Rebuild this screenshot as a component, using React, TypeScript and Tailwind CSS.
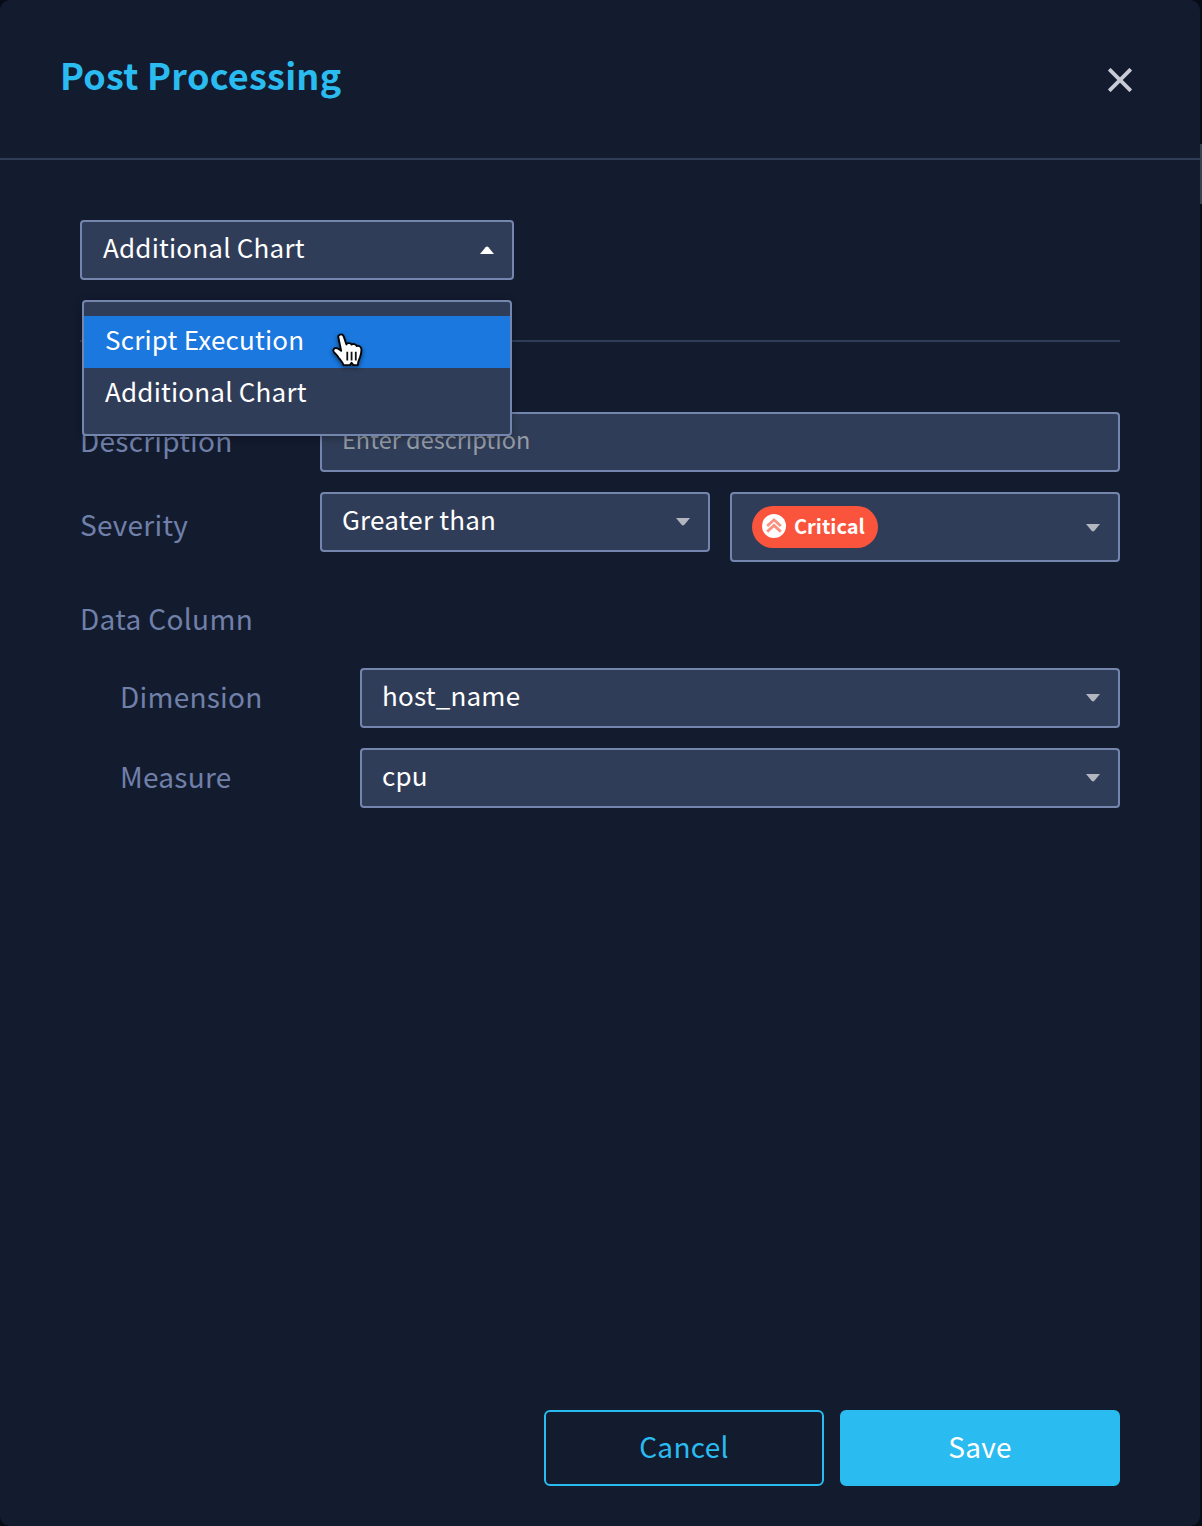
import type { ReactNode } from "react";

function Caret({ up = false }: { up?: boolean }) {
  return (
    <svg className="block h-2 w-[14px] shrink-0" viewBox="0 0 14 8">
      {up ? <path d="M0 8 L5.6 1.2 Q7 -0.4 8.4 1.2 L14 8Z" fill="#ffffff" /> : <path d="M0 0 L14 0 L8.4 6.8 Q7 8.4 5.6 6.8Z" fill="#b3b6bf" />}
    </svg>
  );
}

function Select({ children, className, up }: { children: ReactNode; className: string; up?: boolean }) {
  return (
    <div className={`flex items-center justify-between rounded-[4px] border-2 border-[#7485ae] bg-[#303d58] pr-[18px] pl-5 text-[26px] tracking-[0.2px] text-white ${className}`}>
      {children}
      <Caret up={up} />
    </div>
  );
}

function Value({ children, className = "" }: { children: ReactNode; className?: string }) {
  return <span className={`-mt-[7px] leading-10 ${className}`}>{children}</span>;
}

function Label({ children, className = "" }: { children: ReactNode; className?: string }) {
  return <div className={`text-[28px] leading-10 tracking-[0.25px] text-[#7080a9] ${className}`}>{children}</div>;
}

function HandCursor() {
  return (
    <svg className="absolute top-[25px] left-[243px] h-[42px] w-[42px] drop-shadow-[0_2px_2px_rgba(0,0,0,0.5)]" viewBox="0 0 40 40">
      <path
        d="M12.6 7.2c1.5-.4 2.9.3 3.4 2l2.5 7.4c.2-1.3 4.1-2 4.9.2 1.3-1.1 4.3-.7 4.8 1.3 1.8-.6 4.2.4 4.5 2.8.3 2.8-.4 5.5-1.3 8.1-.8 2.3-2 3.9-2 7.3h-4.3l-1.7-2.2-1.6 2.2h-6.1c-.8-2.8-2.8-4.8-4.6-7-1.2-2.1-2.5-3.4-4.3-5.1-1.3-1.4-1-3.7 1.2-4.2 2-.4 3.5 1 5.5 2.7L10.9 10.3c-.5-1.5.1-2.6 1.7-3.1Z"
        fill="#fff"
        stroke="#050505"
        strokeWidth="1.8"
        strokeLinejoin="round"
      />
      <path d="M19.3 23.5v8.3M23.4 23.5v8.3M27.4 23.5v8.3" stroke="#111" strokeWidth="1.7" />
    </svg>
  );
}

export default function App() {
  return (
    <div className="h-[1526px] w-[1202px] overflow-hidden bg-[#070c17] font-['Noto_Sans_CJK_KR',sans-serif]">
      <div className="flex h-full">
        <main className="flex h-full w-[1200px] flex-col rounded-[10px] bg-[#131b2f]">
          <header className="flex h-[160px] items-start justify-between border-b-2 border-[#303d58] pr-[68px] pl-[60px]">
            <h1 className="mt-[47px] text-[36px] leading-[54px] font-bold tracking-[0.26px] text-[#2abbf0]">Post Processing</h1>
            <svg className="mt-[68px] h-6 w-6" viewBox="0 0 24 24" stroke="#c9ccd6" strokeWidth="3.8">
              <path d="M1.2 1.2 22.8 22.8M22.8 1.2 1.2 22.8" />
            </svg>
          </header>

          <section className="px-20 pt-[60px]">
            <div className="relative w-[434px]">
              <Select className="h-[60px]" up>
                <Value className="pl-px">Additional Chart</Value>
              </Select>
              <div className="absolute top-20 left-[2px] z-10 h-[136px] w-[430px] rounded-[4px] border-2 border-[#7485ae] bg-[#303d58] pt-[14px] text-[26px] tracking-[0.2px] text-white shadow-[0_2px_8px_rgba(0,0,0,0.3)]">
                <div className="h-[52px] bg-[#1a78de] pl-[21px] leading-[46px]">Script Execution</div>
                <div className="h-[52px] pl-[21px] leading-[46px]">Additional Chart</div>
                <HandCursor />
              </div>
            </div>

            <div className="mt-[60px] border-t-2 border-[#303d58]" />

            <div className="mt-[70px] flex h-[60px] items-center">
              <Label className="-mt-1 w-60">Description</Label>
              <div className="h-[60px] flex-1 rounded-[4px] border-2 border-[#7485ae] bg-[#303d58] pl-5 text-[23.5px] leading-[51px] text-[#949ba5]">
                Enter description
              </div>
            </div>

            <div className="mt-5 flex h-[70px] items-start">
              <Label className="mt-3 w-60">Severity</Label>
              <div className="flex flex-1 gap-5">
                <Select className="h-[60px] flex-1">
                  <Value>Greater than</Value>
                </Select>
                <Select className="h-[70px] flex-1 pt-px">
                  <span className="-mt-px flex h-[42px] w-[126px] items-center gap-2 rounded-full bg-[#fa553c] pl-[10px] text-[20px] font-bold tracking-normal">
                    <svg className="-mt-0.5 h-6 w-6" viewBox="0 0 24 24" fill="none">
                      <circle cx="12" cy="12" r="12" fill="#fff" />
                      <path d="m5.2 12 6.8-6.2 6.8 6.2M5.2 17.6l6.8-6.2 6.8 6.2" stroke="#fa553c" strokeOpacity=".65" strokeWidth="2.8" />
                    </svg>
                    <span className="-mt-0.5 leading-7">Critical</span>
                  </span>
                </Select>
              </div>
            </div>

            <Label className="mt-9 tracking-[0.35px]">Data Column</Label>

            <div className="mt-[30px] flex flex-col gap-5 pl-10">
              <div className="flex items-center">
                <Label className="-mt-1 w-60">Dimension</Label>
                <Select className="h-[60px] flex-1">
                  <Value>host_name</Value>
                </Select>
              </div>
              <div className="flex items-center">
                <Label className="-mt-1 w-60">Measure</Label>
                <Select className="h-[60px] flex-1">
                  <Value>cpu</Value>
                </Select>
              </div>
            </div>
          </section>

          <footer className="mt-auto mb-10 flex justify-end gap-4 pr-20 text-[28px] leading-[68px] tracking-[0.3px]">
            <button className="h-[76px] w-[280px] rounded-[6px] border-2 border-[#2abbf0] pb-1 text-[#2abbf0]">Cancel</button>
            <button className="h-[76px] w-[280px] rounded-[6px] border-2 border-[#2abbf0] bg-[#2abbf0] pb-1 text-white">Save</button>
          </footer>
        </main>
        <div className="mt-36 h-[60px] w-0.5 bg-[#374151]" />
      </div>
    </div>
  );
}
